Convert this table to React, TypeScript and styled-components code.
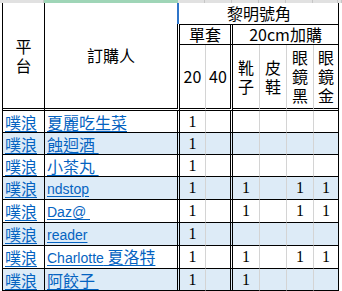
import styled, { createGlobalStyle } from 'styled-components';

const GlobalStyle = createGlobalStyle`
  html, body {
    margin: 0;
    padding: 0;
    background: #ffffff;
  }
`;

type Edge = 'gray' | 'double' | 'black';

type Order = {
    latin?: string;
    cjk?: string;
    marks: number[];
};

const orders: Order[] = [
    { cjk: '夏麗吃生菜', marks: [1, 0, 0, 0, 0, 0] },
    { cjk: '蝕迴酒 ', marks: [1, 0, 0, 0, 0, 0] },
    { cjk: '小茶丸 ', marks: [1, 0, 0, 0, 0, 0] },
    { latin: 'ndstop', marks: [1, 0, 1, 0, 1, 1] },
    { latin: 'Daz@ ', marks: [1, 0, 1, 0, 1, 1] },
    { latin: 'reader', marks: [1, 0, 0, 0, 0, 0] },
    { latin: 'Charlotte', cjk: ' 夏洛特', marks: [1, 0, 1, 0, 1, 1] },
    { cjk: '阿餃子 ', marks: [1, 0, 1, 0, 0, 0] },
];

// widths of the spreadsheet column letters strip, the second one is selected
const stripCols = [44, 134, 27, 27, 27, 27, 27, 25, 4];

// right border of each mark column: gray line, double line or black line
const markEdges: Edge[] = ['gray', 'double', 'gray', 'gray', 'gray', 'black'];
const markWidths = [25, 24, 26, 26, 26, 24];

const edgeCss = (edge: Edge) =>
    edge === 'double' ? '3px double #000' : edge === 'gray' ? '1px solid #d4d4d4' : '1px solid #000';

const App = () => {
    return (
        <Sheet>
            <GlobalStyle />
            <ColumnStrip>
                {stripCols.map((w, i) => (
                    <ColumnHead key={i} $width={w} $selected={i === 1} />
                ))}
            </ColumnStrip>
            <Grid>
                <colgroup>
                    <col style={{ width: 42 }} />
                    <col style={{ width: 135 }} />
                    {markWidths.map((w, i) => (
                        <col key={i} style={{ width: w + (markEdges[i] === 'double' ? 3 : 1) }} />
                    ))}
                </colgroup>
                <thead>
                    <HeadRow $height={22}>
                        <HeadCell rowSpan={3} $edge="black" $bottom="double">
                            <Stack>
                                平<br />台
                            </Stack>
                        </HeadCell>
                        <HeadCell rowSpan={3} $edge="double" $bottom="double" $relative>
                            <SelectMark />
                            訂購人
                        </HeadCell>
                        <HeadCell colSpan={6} $edge="black" $bottom="black">
                            黎明號角
                        </HeadCell>
                    </HeadRow>
                    <HeadRow $height={20}>
                        <HeadCell colSpan={2} $edge="double" $bottom="black">
                            單套
                        </HeadCell>
                        <HeadCell colSpan={4} $edge="black" $bottom="black">
                            20cm加購
                        </HeadCell>
                    </HeadRow>
                    <HeadRow $height={66}>
                        <HeadCell $edge="gray" $bottom="double">20</HeadCell>
                        <HeadCell $edge="double" $bottom="double">40</HeadCell>
                        <HeadCell $edge="gray" $bottom="double">
                            <Stack>
                                靴<br />子
                            </Stack>
                        </HeadCell>
                        <HeadCell $edge="gray" $bottom="double">
                            <Stack>
                                皮<br />鞋
                            </Stack>
                        </HeadCell>
                        <HeadCell $edge="gray" $bottom="double">
                            <Stack>
                                眼<br />鏡<br />黑
                            </Stack>
                        </HeadCell>
                        <HeadCell $edge="black" $bottom="double">
                            <Stack>
                                眼<br />鏡<br />金
                            </Stack>
                        </HeadCell>
                    </HeadRow>
                </thead>
                <tbody>
                    {orders.map((o, r) => (
                        <DataRow key={r} $shaded={r % 2 === 1}>
                            <NameCell $edge="black">
                                <SheetLink href="#">噗浪</SheetLink>
                            </NameCell>
                            <NameCell $edge="double">
                                <SheetLink href="#">
                                    {o.latin && <Latin>{o.latin}</Latin>}
                                    {o.cjk}
                                </SheetLink>
                            </NameCell>
                            {o.marks.map((m, i) => (
                                <MarkCell key={i} $edge={markEdges[i]}>
                                    {m ? '1' : ''}
                                </MarkCell>
                            ))}
                        </DataRow>
                    ))}
                    <DataRow $shaded={false}>
                        <NameCell $edge="black" />
                        <NameCell $edge="double" />
                        {markEdges.map((e, i) => (
                            <MarkCell key={i} $edge={e} />
                        ))}
                    </DataRow>
                </tbody>
            </Grid>
        </Sheet>
    );
};
export default App;

const Sheet = styled.div`
    width: 342px;
    height: 291px;
    overflow: hidden;
    background: #ffffff;
`;

const ColumnStrip = styled.div`
    display: flex;
    height: 3px;
    background: #e1e1e1;
`;

const ColumnHead = styled.div<{ $width: number; $selected: boolean }>`
    flex: 0 0 ${props => props.$width}px;
    box-sizing: border-box;
    height: 3px;
    background: ${props => (props.$selected ? '#9fd5b7' : '#e1e1e1')};
    border-right: 1px solid ${props => (props.$selected ? '#9fd5b7' : '#c6c6c6')};
`;

const Grid = styled.table`
    margin-left: 2px;
    border-collapse: separate;
    border-spacing: 0;
    table-layout: fixed;
    width: 336px;
    border-left: 1px solid #000;
    font-family: 'Noto Sans CJK TC', 'Noto Sans', sans-serif;
    color: #000;
`;

const HeadRow = styled.tr<{ $height: number }>`
    height: ${props => props.$height}px;
`;

const HeadCell = styled.th<{ $edge: Edge; $bottom: Edge; $relative?: boolean }>`
    position: ${props => (props.$relative ? 'relative' : 'static')};
    padding: 0;
    font-weight: normal;
    font-size: 16px;
    line-height: 19px;
    text-align: center;
    vertical-align: middle;
    white-space: nowrap;
    border-right: ${props => edgeCss(props.$edge)};
    border-bottom: ${props => edgeCss(props.$bottom)};
`;

const Stack = styled.div`
    line-height: 19px;
`;

const SelectMark = styled.span`
    position: absolute;
    top: 0;
    right: -3px;
    width: 2px;
    height: 21px;
    background: #2f75c9;
    border-right: 1px solid #ffffff;
`;

const DataRow = styled.tr<{ $shaded: boolean }>`
    height: 22px;
    background: ${props => (props.$shaded ? '#ddebf7' : '#ffffff')};
`;

const NameCell = styled.td<{ $edge: Edge }>`
    padding: 0 0 0 2px;
    font-size: 16px;
    line-height: 20px;
    white-space: pre;
    overflow: hidden;
    vertical-align: middle;
    border-right: ${props => edgeCss(props.$edge)};
    border-bottom: 1px solid #000;
`;

const MarkCell = styled.td<{ $edge: Edge }>`
    padding: 0;
    text-align: center;
    vertical-align: middle;
    font-family: 'Liberation Serif', serif;
    font-size: 16px;
    line-height: 20px;
    border-right: ${props => edgeCss(props.$edge)};
    border-bottom: 1px solid #000;
`;

const SheetLink = styled.a`
    color: #0563c1;
    text-decoration: underline;
    text-underline-offset: 2px;
`;

const Latin = styled.span`
    font-family: 'Liberation Sans', Arial, sans-serif;
    font-size: 14px;
`;
